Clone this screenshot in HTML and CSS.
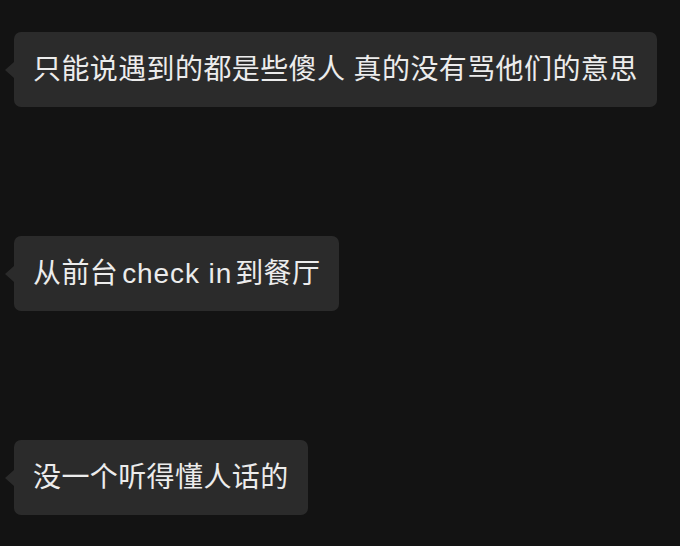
FILE: index.html
```html
<!DOCTYPE html>
<html>
<head>
    <meta charset="utf-8">
    <title>Messages</title>
    <link rel="stylesheet" href="styles.css">
</head>
<body>

<div class="chat">
    <div class="bubble">只能说遇到的都是些傻人 真的没有骂他们的意思</div>
    <div class="bubble">从前台<span class="latin">check in</span>到餐厅</div>
    <div class="bubble">没一个听得懂人话的</div>
</div>

</body>
</html>
```

FILE: styles.css
```css
body {
    margin: 0;
    background-color: #131313;
    font-family: "Liberation Sans", "Noto Sans CJK SC", sans-serif;
}

.chat {
    display: flex;
    flex-direction: column;
    align-items: flex-start;
    gap: 129px;
    padding: 32px 0 0 14px;
}

.bubble {
    position: relative;
    background-color: #2b2b2b;
    color: #ececec;
    font-size: 28px;
    letter-spacing: 0.4px;
    line-height: 39px;
    padding: 18px 19px 18px 19px;
    border-radius: 7px;
    white-space: nowrap;
}

.bubble::before {
    content: "";
    position: absolute;
    left: -9px;
    top: 50%;
    margin-top: -8px;
    border-top: 8px solid transparent;
    border-bottom: 8px solid transparent;
    border-right: 9px solid #2b2b2b;
}

.latin {
    margin: 0 3px 0 4px;
    letter-spacing: 0.9px;
}
```
